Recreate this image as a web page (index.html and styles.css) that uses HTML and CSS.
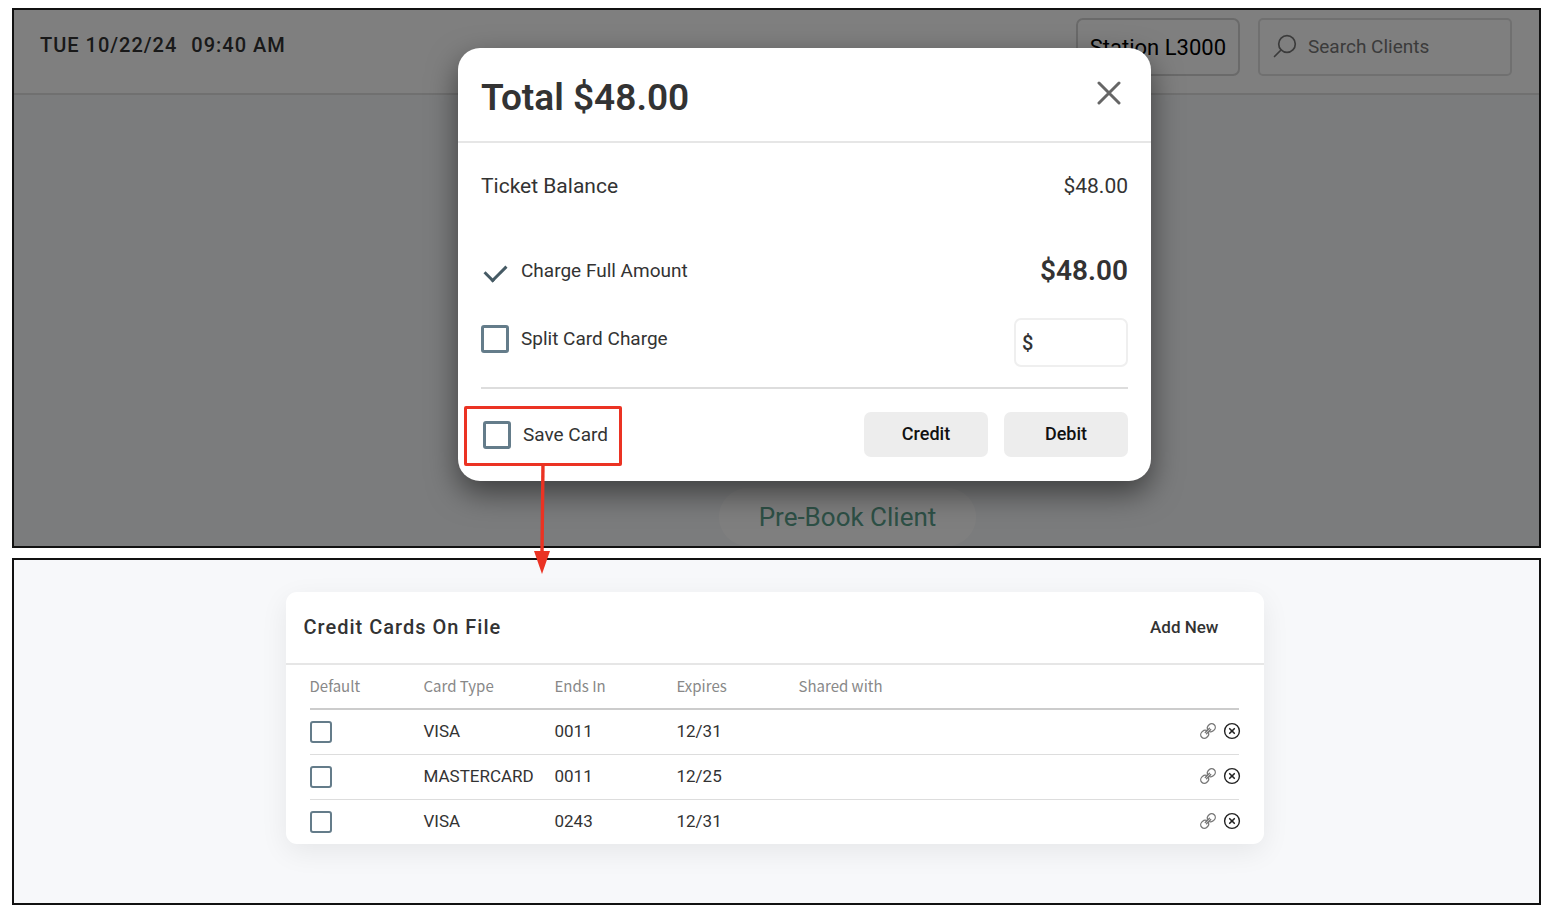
FILE: index.html
```
<!DOCTYPE html>
<html lang="en">
<head>
    <meta charset="UTF-8">
    <meta name="viewport" content="width=device-width, initial-scale=1.0">
    <title>Save Card</title>
    <link rel="stylesheet" href="styles.css">
</head>
<body>
    <!-- checkout screen with payment dialog -->
    <section class="panel checkout">
        <header class="top-bar">
            <div class="clock"><span>TUE 10/22/24</span><span>09:40 AM</span></div>
            <div class="top-tools">
                <button type="button" class="station">Station L3000</button>
                <label class="search">
                    <svg width="26" height="26" viewBox="0 0 26 26" fill="none" stroke="#777" stroke-width="1.7" stroke-linecap="round">
                        <circle cx="15" cy="10" r="8.3"/>
                        <path d="M9 16 2.5 22.5"/>
                    </svg>
                    <input type="text" placeholder="Search Clients" aria-label="Search Clients">
                </label>
            </div>
        </header>
        <div class="checkout-body">
            <button type="button" class="prebook">Pre-Book Client</button>
        </div>

        <div class="overlay">
            <div class="modal" role="dialog" aria-labelledby="modal-title">
                <div class="modal-header">
                    <h1 id="modal-title">Total $48.00</h1>
                    <button type="button" class="close" aria-label="Close">
                        <svg width="24" height="24" viewBox="0 0 24 24" fill="none" stroke="#666" stroke-width="3" stroke-linecap="round">
                            <path d="M2 2 22 22M22 2 2 22"/>
                        </svg>
                    </button>
                </div>
                <div class="modal-body">
                    <div class="row balance">
                        <span>Ticket Balance</span>
                        <span>$48.00</span>
                    </div>
                    <div class="row charge">
                        <label class="option"><input type="checkbox" class="check" checked>Charge Full Amount</label>
                        <strong>$48.00</strong>
                    </div>
                    <div class="row split">
                        <label class="option"><input type="checkbox" class="check">Split Card Charge</label>
                        <input type="text" class="amount" value="$" aria-label="Split amount">
                    </div>
                    <div class="modal-footer">
                        <div class="callout">
                            <label class="option"><input type="checkbox" class="check">Save Card</label>
                            <svg class="arrow" width="18" height="111" viewBox="0 0 18 111">
                                <path d="M10 0 9 90" stroke="#eb3323" stroke-width="3.4"/>
                                <path d="M1 88H17L9 111Z" fill="#eb3323"/>
                            </svg>
                        </div>
                        <div class="actions">
                            <button type="button">Credit</button>
                            <button type="button">Debit</button>
                        </div>
                    </div>
                </div>
            </div>
        </div>
    </section>

    <!-- cards on file -->
    <section class="panel cards">
        <div class="card">
            <div class="card-header">
                <h2>Credit Cards On File</h2>
                <button type="button" class="add-new">Add New</button>
            </div>
            <table>
                <thead>
                    <tr>
                        <th class="col-default">Default</th>
                        <th class="col-type">Card Type</th>
                        <th class="col-num">Ends In</th>
                        <th class="col-num">Expires</th>
                        <th>Shared with</th>
                        <th class="col-tools"></th>
                    </tr>
                </thead>
                <tbody>
                    <tr>
                        <td><input type="checkbox" class="check small" aria-label="Default"></td>
                        <td>VISA</td>
                        <td>0011</td>
                        <td>12/31</td>
                        <td></td>
                        <td>
                            <div class="tools">
                                <button type="button" aria-label="Share"><svg width="16" height="16" viewBox="0 0 16 16"><use href="#link"/></svg></button>
                                <button type="button" aria-label="Remove"><svg width="18" height="18" viewBox="0 0 18 18"><use href="#remove"/></svg></button>
                            </div>
                        </td>
                    </tr>
                    <tr>
                        <td><input type="checkbox" class="check small" aria-label="Default"></td>
                        <td>MASTERCARD</td>
                        <td>0011</td>
                        <td>12/25</td>
                        <td></td>
                        <td>
                            <div class="tools">
                                <button type="button" aria-label="Share"><svg width="16" height="16" viewBox="0 0 16 16"><use href="#link"/></svg></button>
                                <button type="button" aria-label="Remove"><svg width="18" height="18" viewBox="0 0 18 18"><use href="#remove"/></svg></button>
                            </div>
                        </td>
                    </tr>
                    <tr>
                        <td><input type="checkbox" class="check small" aria-label="Default"></td>
                        <td>VISA</td>
                        <td>0243</td>
                        <td>12/31</td>
                        <td></td>
                        <td>
                            <div class="tools">
                                <button type="button" aria-label="Share"><svg width="16" height="16" viewBox="0 0 16 16"><use href="#link"/></svg></button>
                                <button type="button" aria-label="Remove"><svg width="18" height="18" viewBox="0 0 18 18"><use href="#remove"/></svg></button>
                            </div>
                        </td>
                    </tr>
                </tbody>
            </table>
        </div>
    </section>

    <svg class="icons" width="0" height="0">
        <symbol id="link" viewBox="0 0 16 16">
            <g fill="none" stroke="#777" stroke-width="1.3" stroke-linecap="round" transform="rotate(-45 8 8)">
                <path d="M7.2 9.6A3.6 3.6 0 0 1 4.2 11.6H2.8A3.6 3.6 0 0 1 2.8 4.4H4.2A3.6 3.6 0 0 1 7.2 6.4"/>
                <path d="M8.8 6.4A3.6 3.6 0 0 1 11.8 4.4H13.2A3.6 3.6 0 0 1 13.2 11.6H11.8A3.6 3.6 0 0 1 8.8 9.6"/>
                <path d="M5 7.1H11M5 8.9H11"/>
            </g>
        </symbol>
        <symbol id="remove" viewBox="0 0 18 18">
            <g fill="none" stroke="#222" stroke-linecap="round">
                <circle cx="9" cy="9" r="7.4" stroke-width="1.4"/>
                <path d="M6.7 6.7 11.3 11.3M11.3 6.7 6.7 11.3" stroke-width="1.6"/>
            </g>
        </symbol>
    </svg>
</body>
</html>
```
FILE: styles.css
```
* {
    box-sizing: border-box;
}

body {
    margin: 0;
    padding: 8px 11px 11px 12px;
    display: flex;
    flex-direction: column;
    gap: 10px;
    min-height: 100vh;
    font-family: Roboto, "Liberation Sans", sans-serif;
    color: #333;
    background-color: #fff;
}

button,
input {
    font-family: inherit;
    color: inherit;
}

button {
    padding: 0;
    border: none;
    background: none;
    cursor: pointer;
}

svg {
    display: block;
}

.icons {
    position: absolute;
}

.panel {
    border: 2px solid #111;
    background-color: #f7f8fa;
}

/* checkout screen */
.checkout {
    position: relative;
    display: flex;
    flex-direction: column;
    min-height: 540px;
}

.top-bar {
    display: flex;
    justify-content: space-between;
    align-items: flex-start;
    padding: 8px 27px 17px 26px;
    border-bottom: 2px solid #e0e0e0;
    background-color: #fff;
}

.clock {
    display: flex;
    gap: 14px;
    padding-top: 15px;
    font-size: 20px;
    line-height: 24px;
    font-weight: 500;
    letter-spacing: 1px;
}

.top-tools {
    display: flex;
    gap: 18px;
}

.station {
    height: 58px;
    padding: 0 12px;
    border: 2px solid #d4d4d4;
    border-radius: 7px;
    font-size: 22px;
    color: #000;
}

.search {
    display: flex;
    align-items: center;
    gap: 10px;
    width: 254px;
    height: 58px;
    padding: 0 12px;
    border: 2px solid #e0e0e0;
    border-radius: 5px;
}

.search input {
    flex: 1;
    min-width: 0;
    padding: 0 0 2px;
    border: none;
    outline: none;
    background: none;
    font-size: 19px;
}

.search input::placeholder {
    color: #777;
}

.checkout-body {
    flex: 1;
    display: flex;
    justify-content: center;
    align-items: flex-end;
    padding-left: 142px;
}

.prebook {
    height: 58px;
    padding: 0 40px;
    border-radius: 29px;
    background-color: #fff;
    font-size: 26px;
    color: #5aa08c;
}

.overlay {
    position: absolute;
    inset: 0;
    display: flex;
    justify-content: center;
    align-items: flex-start;
    padding: 38px 0 0 56px;
    background-color: rgba(0, 0, 0, 0.5);
}

/* payment dialog */
.modal {
    width: 693px;
    border-radius: 22px;
    background-color: #fff;
    box-shadow: 0 12px 30px rgba(0, 0, 0, 0.5);
}

.modal-header {
    display: flex;
    justify-content: space-between;
    align-items: flex-start;
    padding: 26px 23px 19px;
    border-bottom: 2px solid #e6e6e6;
}

.modal-header h1 {
    margin: 0;
    font-size: 37px;
    line-height: 48px;
    font-weight: 600;
}

.close {
    padding: 7px;
}

.modal-body {
    padding: 0 23px 15px;
}

.row {
    display: flex;
    justify-content: space-between;
    align-items: center;
}

.balance {
    height: 85px;
    font-size: 21px;
}

.charge {
    height: 85px;
}

.charge strong {
    font-size: 28px;
    font-weight: 600;
}

.split {
    align-items: flex-start;
    padding: 5px 0 20px;
}

.split .option {
    padding-top: 7px;
}

.option {
    display: flex;
    align-items: center;
    gap: 12px;
    font-size: 19px;
    line-height: 28px;
    cursor: pointer;
}

.check {
    appearance: none;
    flex: none;
    display: flex;
    justify-content: center;
    width: 28px;
    height: 28px;
    margin: 0;
    border: 3px solid #647c8a;
    border-radius: 3px;
    background-color: #fff;
}

.check:checked {
    border-color: transparent;
}

.check:checked::after {
    content: "";
    width: 10px;
    height: 18px;
    border: solid #455a64;
    border-width: 0 3px 3px 0;
    transform: rotate(45deg);
}

.check.small {
    width: 22px;
    height: 22px;
    border-width: 2px;
}

.amount {
    width: 114px;
    height: 49px;
    padding: 0 6px;
    border: 2px solid #efefef;
    border-radius: 7px;
    font-size: 20px;
    font-weight: 500;
}

.modal-footer {
    display: flex;
    justify-content: space-between;
    align-items: flex-start;
    padding-top: 17px;
    border-top: 2px solid #ddd;
}

.callout {
    position: relative;
    margin-left: -17px;
    padding: 12px 11px 14px 16px;
    border: 3px solid #eb3323;
    border-radius: 2px;
}

.arrow {
    position: absolute;
    top: 100%;
    left: 66px;
    z-index: 1;
}

.actions {
    display: flex;
    gap: 16px;
    padding-top: 6px;
}

.actions button {
    width: 124px;
    height: 45px;
    padding-bottom: 2px;
    border-radius: 7px;
    background-color: #ededed;
    font-size: 18px;
    font-weight: 500;
    color: #111;
}

/* cards on file */
.cards {
    flex: 1;
    padding: 32px 4px 32px 0;
}

.card {
    max-width: 978px;
    margin: 0 auto;
    border-radius: 11px;
    background-color: #fff;
    box-shadow: 0 8px 28px rgba(0, 0, 0, 0.07);
}

.card-header {
    display: flex;
    justify-content: space-between;
    align-items: center;
    height: 73px;
    padding: 0 45px 2px 18px;
    border-bottom: 2px solid #e6e6e6;
}

.card-header h2 {
    margin: 0;
    font-size: 20px;
    font-weight: 500;
    letter-spacing: 1px;
}

.add-new {
    font-size: 17px;
    font-weight: 500;
}

table {
    width: calc(100% - 49px);
    margin: 0 25px 0 24px;
    border-collapse: separate;
    border-spacing: 0;
    table-layout: fixed;
    font-size: 17px;
    text-align: left;
}

th {
    height: 45px;
    padding: 0 0 2px;
    border-bottom: 2px solid #ccc;
    font-family: "Noto Sans CJK SC", sans-serif;
    font-size: 15px;
    line-height: 20px;
    font-weight: 400;
    color: #888;
}

td {
    height: 45px;
    padding: 0 0 2px;
    border-bottom: 1px solid #ddd;
    line-height: 20px;
}

tbody tr:last-child td {
    height: 44px;
    border-bottom: none;
}

td .check {
    margin-top: 1px;
}

.col-default {
    width: 114px;
}

.col-type {
    width: 131px;
}

.col-num {
    width: 122px;
}

.col-tools {
    width: 60px;
}

.tools {
    display: flex;
    justify-content: flex-end;
    align-items: center;
    gap: 7px;
    margin-right: -2px;
}
```
